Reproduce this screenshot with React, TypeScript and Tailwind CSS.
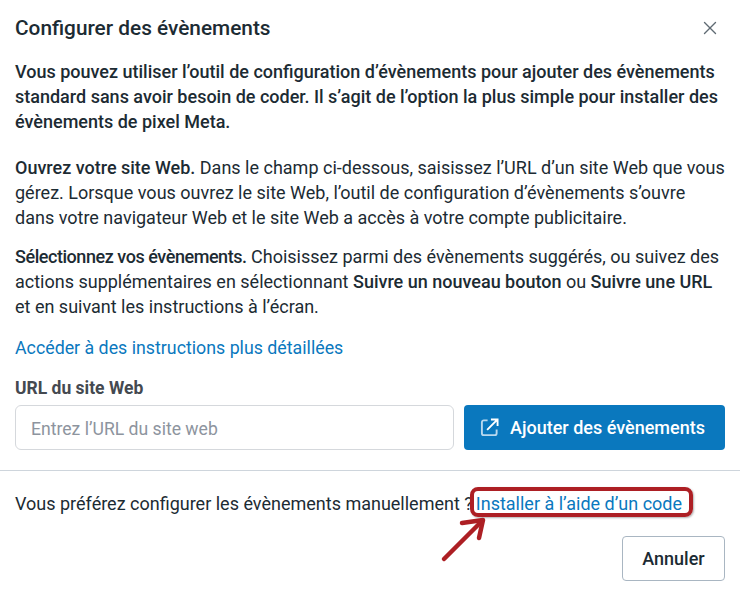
import { X } from 'lucide-react'

function ExternalIcon() {
  return (
    <svg width="19" height="19" viewBox="0 0 20 20" fill="none" stroke="currentColor" strokeWidth="2" className="text-[#b9d8ee]">
      <path d="M8 2.500H4a2 2 0 0 0-2 2V16a2 2 0 0 0 2 2h11.500a2 2 0 0 0 2-2v-4" />
      <path d="M7.500 12.500 18 2M11.500 1.500h7v7" stroke="#ffffff" />
    </svg>
  )
}

export default function App() {
  return (
    <div className="relative w-[740px] h-[600px] bg-white overflow-hidden text-[18px] leading-[25px] text-[#1c2b33] font-['Roboto',sans-serif]">
      <div className="flex items-center justify-between pl-[15px] pr-[19px] pt-[11px] h-[45px]">
        <h1 className="text-[20.8px] font-medium">Configurer des évènements</h1>
        <X size={22} strokeWidth={1.5} className="text-[#5f6b73]" />
      </div>

      <div className="px-[15px] pt-[14px]">
        <p className="font-medium">
          Vous pouvez utiliser l’outil de configuration d’évènements pour ajouter des évènements standard sans avoir besoin de coder. Il s’agit de l’option la plus simple pour installer des évènements de pixel Meta.
        </p>
        <p className="mt-[21px]">
          <span className="font-medium">Ouvrez votre site Web.</span> Dans le champ ci-dessous, saisissez l’URL d’un site Web que vous gérez. Lorsque vous ouvrez le site Web, l’outil de configuration d’évènements s’ouvre dans votre navigateur Web et le site Web a accès à votre compte publicitaire.
        </p>
        <p className="mt-[14px]">
          <span className="font-medium tracking-[-0.45px]">Sélectionnez vos évènements.</span> Choisissez parmi des évènements suggérés, ou suivez des actions supplémentaires en sélectionnant <span className="font-medium">Suivre un nouveau bouton</span> ou <span className="font-medium">Suivre une URL</span> et en suivant les instructions à l’écran.
        </p>
        <a className="block mt-[16px] text-[17.8px] text-[#0a78be]">Accéder à des instructions plus détaillées</a>

        <label className="block mt-[16px] font-bold text-[17.5px] text-[#444950]">URL du site Web</label>
        <div className="flex gap-[10px] mt-[4px]">
          <div className="w-[439px] h-[45px] flex items-center border border-[#d5d8dc] rounded-[6px] pl-[15px] pt-[3px] text-[17.6px] text-[#8d949e]">
            Entrez l’URL du site web
          </div>
          <button className="w-[261px] h-[45px] flex items-center justify-center gap-[11px] pr-[4px] bg-[#0a78be] rounded-[4px] text-white font-medium">
            <ExternalIcon />
            Ajouter des évènements
          </button>
        </div>
      </div>

      <div className="h-px bg-[#ced5dc] mt-[20px]" />

      <div className="px-[15px] pt-[20px]">
        <p>
          Vous préférez configurer les évènements manuellement ?<a className="ml-[3px] text-[#0a78be]">Installer à l’aide d’un code</a>
        </p>
      </div>

      <div className="flex justify-end pr-[15px] mt-[20px]">
        <button className="w-[103px] h-[45px] border border-[#a9b6c2] rounded-[4px] font-medium">Annuler</button>
      </div>

      {/* annotation drawn on top of the screenshot */}
      <div className="absolute left-[470px] top-[487px] w-[223px] h-[30px] border-[4px] border-[#ad1f24] rounded-[8px] shadow-[1px_1px_2px_rgba(0,0,0,0.3)]" />
      <svg className="absolute left-[436px] top-[512px]" width="60" height="60" viewBox="0 0 60 60" fill="none" stroke="#ad1f24" strokeWidth="4.500" strokeLinecap="round" strokeLinejoin="round">
        <path d="M8 47 46 9" />
        <path d="M26 11 47 8 43 26" />
      </svg>
    </div>
  )
}
